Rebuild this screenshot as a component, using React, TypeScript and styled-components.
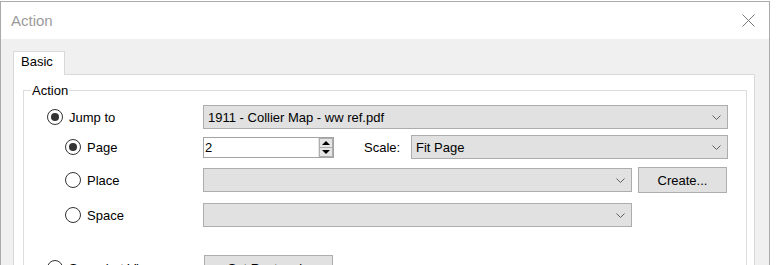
import React from "react";
import styled, { createGlobalStyle } from "styled-components";

const GlobalStyle = createGlobalStyle`
  html, body {
    margin: 0;
    padding: 0;
    background: #ffffff;
    overflow: hidden;
  }
  body {
    font-family: "Liberation Sans", Arial, sans-serif;
    font-size: 13px;
    color: #000;
  }
`;

const Page = styled.div`
  padding-top: 1px;
  width: 777px;
  height: 265px;
`;

const Window = styled.div`
  width: 768px;
  height: 320px;
  border: 1px solid #aaaaaa;
  display: flex;
  flex-direction: column;
`;

const TitleBar = styled.div`
  height: 37px;
  display: flex;
  align-items: center;
  justify-content: space-between;
  padding: 0 14px 0 10px;
  background: #fff;
`;

const Title = styled.div`
  font-size: 15px;
  line-height: 37px;
  color: #9b9b9b;
`;

const CloseBtn = styled.div`
  width: 13px;
  height: 13px;
  display: flex;
  align-items: center;
  justify-content: center;
`;

const Body = styled.div`
  flex: 1;
  background: #f0f0f0;
  padding: 12px 14px 0 12px;
`;

const TabStrip = styled.div`
  display: flex;
`;

const Tab = styled.div`
  position: relative;
  z-index: 1;
  box-sizing: border-box;
  width: 52px;
  height: 24px;
  padding: 2px 0 5px 7px;
  line-height: 15px;
  background: #fff;
  border: 1px solid #d9d9d9;
  border-bottom: none;
  margin-bottom: -1px;
`;

const Panel = styled.div`
  background: #fff;
  border: 1px solid #d9d9d9;
  height: 240px;
  padding: 8px 7px 0 9px;
`;

const Group = styled.fieldset`
  margin: 0;
  padding: 7px 18px 0 0;
  border: 1px solid #dcdcdc;
  min-inline-size: 0;
  height: 220px;
  display: flex;
  flex-direction: column;
`;

const Legend = styled.legend`
  margin-left: 7px;
  padding: 0 1px;
  line-height: 15px;
`;

const Row = styled.div<{ $mt?: number; $h?: number }>`
  display: grid;
  grid-template-columns: 179px 1fr;
  align-items: center;
  margin-top: ${(p) => p.$mt ?? 0}px;
  height: ${(p) => p.$h ?? 24}px;
`;

const Option = styled.label<{ $level?: number }>`
  display: flex;
  align-items: center;
  gap: 6px;
  padding-left: ${(p) => (p.$level === 2 ? 41 : 23)}px;
  line-height: 15px;
`;

const Radio = styled.span<{ $checked?: boolean }>`
  width: 16px;
  height: 16px;
  box-sizing: border-box;
  border-radius: 50%;
  border: 1px solid #333;
  background: #fff;
  display: flex;
  align-items: center;
  justify-content: center;
  &::after {
    content: "";
    width: 8px;
    height: 8px;
    border-radius: 50%;
    background: #333;
    display: ${(p) => (p.$checked ? "block" : "none")};
  }
`;

const Controls = styled.div`
  display: flex;
  align-items: center;
`;

const Select = styled.div<{ $w?: number }>`
  box-sizing: border-box;
  height: 24px;
  width: ${(p) => (p.$w ? `${p.$w}px` : "100%")};
  background: #e1e1e1;
  border: 1px solid #adadad;
  display: flex;
  align-items: center;
  justify-content: space-between;
  padding: 0 6px 0 4px;
  line-height: 15px;
  margin-left: ${(p) => (p.$w ? "auto" : "0")};
`;

const FixedSelect = styled(Select)`
  margin-left: 0;
`;

const SpinBox = styled.div`
  box-sizing: border-box;
  width: 131px;
  height: 21px;
  border: 1px solid #a3a3a3;
  background: #fff;
  display: flex;
  align-items: center;
  justify-content: space-between;
  padding: 0 0 0 1px;
`;

const SpinButtons = styled.div`
  display: flex;
  flex-direction: column;
  width: 14px;
  height: 19px;
  border-left: 1px solid #e6e6e6;
`;

const SpinBtn = styled.div<{ $down?: boolean }>`
  flex: 1;
  box-sizing: border-box;
  background: #e6e6e6;
  border: 1px solid #adadad;
  margin-top: ${(p) => (p.$down ? "-1px" : "0")};
  display: flex;
  align-items: center;
  justify-content: center;
  &::after {
    content: "";
    width: 0;
    height: 0;
    border-left: 4px solid transparent;
    border-right: 4px solid transparent;
    ${(p) =>
      p.$down
        ? "border-top: 4px solid #000;"
        : "border-bottom: 4px solid #000;"}
  }
`;

const ScaleLabel = styled.span`
  margin-left: 30px;
`;

const Button = styled.div<{ $w: number; $ml?: number }>`
  box-sizing: border-box;
  width: ${(p) => p.$w}px;
  height: 26px;
  margin-left: ${(p) => p.$ml ?? 0}px;
  background: #e1e1e1;
  border: 1px solid #adadad;
  display: flex;
  align-items: center;
  justify-content: center;
  line-height: 15px;
`;

const Chevron = () => (
  <svg width="9" height="5" viewBox="0 0 9 5">
    <polyline
      points="0.5,0.5 4.5,4.5 8.5,0.5"
      fill="none"
      stroke="#606060"
      strokeWidth="1"
    />
  </svg>
);

const Dropdown = ({ text, width }: { text?: string; width?: number }) => (
  <FixedSelect $w={width}>
    <span>{text}</span>
    <Chevron />
  </FixedSelect>
);

export default function App() {
  return (
    <>
      <GlobalStyle />
      <Page>
        <Window>
          <TitleBar>
            <Title>Action</Title>
            <CloseBtn>
              <svg width="13" height="13" viewBox="0 0 13 13">
                <path d="M0.5 0.5 L12.5 12.5 M12.5 0.5 L0.5 12.5" stroke="#7a7a7a" strokeWidth="1" />
              </svg>
            </CloseBtn>
          </TitleBar>
          <Body>
            <TabStrip>
              <Tab>Basic</Tab>
            </TabStrip>
            <Panel>
              <Group>
                <Legend>Action</Legend>
                <Row>
                  <Option>
                    <Radio $checked />
                    Jump to
                  </Option>
                  <Controls>
                    <Dropdown text="1911 - Collier Map - ww ref.pdf" />
                  </Controls>
                </Row>
                <Row $mt={6}>
                  <Option $level={2}>
                    <Radio $checked />
                    Page
                  </Option>
                  <Controls>
                    <SpinBox>
                      <span>2</span>
                      <SpinButtons>
                        <SpinBtn />
                        <SpinBtn $down />
                      </SpinButtons>
                    </SpinBox>
                    <ScaleLabel>Scale:</ScaleLabel>
                    <Select $w={317}>
                      <span>Fit Page</span>
                      <Chevron />
                    </Select>
                  </Controls>
                </Row>
                <Row $mt={8} $h={26}>
                  <Option $level={2}>
                    <Radio />
                    Place
                  </Option>
                  <Controls>
                    <Dropdown width={429} />
                    <Button $w={89} $ml={6}>Create...</Button>
                  </Controls>
                </Row>
                <Row $mt={10}>
                  <Option $level={2}>
                    <Radio />
                    Space
                  </Option>
                  <Controls>
                    <Dropdown width={429} />
                  </Controls>
                </Row>
                <Row $mt={28} $h={26}>
                  <Option>
                    <Radio />
                    Snapshot View
                  </Option>
                  <Controls>
                    <Button $w={129} $ml={1}>Set Rectangle</Button>
                  </Controls>
                </Row>
              </Group>
            </Panel>
          </Body>
        </Window>
      </Page>
    </>
  );
}
